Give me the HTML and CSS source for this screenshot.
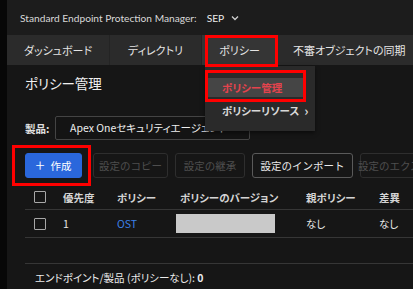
FILE: index.html
```html
<!DOCTYPE html>
<html lang="ja">
<head>
<meta charset="utf-8">
<link rel="stylesheet" href="styles.css">
</head>
<body>
<div class="app">
  <div class="rail"></div>
  <div class="main">
    <header class="topbar">
      <span class="product">Standard Endpoint Protection Manager:</span>
      <span class="server">SEP</span>
      <svg class="chev" width="8" height="6" viewBox="0 0 8 6"><path d="M1 1.5 L4 4.5 L7 1.5" fill="none" stroke="#cfcfcf" stroke-width="1.3"/></svg>
    </header>
    <nav class="nav">
      <div class="tab t-dash">ダッシュボード</div>
      <div class="tab t-dir">ディレクトリ</div>
      <div class="tab t-pol active">ポリシー</div>
      <div class="tab t-sus">不審オブジェクトの同期</div>
    </nav>
    <section class="content">
      <h1 class="title">ポリシー管理</h1>
      <div class="product-row">
        <span class="label">製品:</span>
        <div class="select">Apex Oneセキュリティエージェント</div>
      </div>
      <div class="toolbar">
        <button class="btn primary"><span class="plus">+</span>作成</button>
        <button class="btn disabled w-copy">設定のコピー</button>
        <button class="btn disabled w-inh">設定の継承</button>
        <button class="btn w-imp">設定のインポート</button>
        <button class="btn disabled w-exp">設定のエクスポート</button>
      </div>
      <div class="table">
        <div class="row head">
          <div class="cell c-chk"><span class="chk"></span></div>
          <div class="cell c-pri">優先度</div>
          <div class="cell c-pol">ポリシー</div>
          <div class="cell c-ver pad">ポリシーのバージョン</div>
          <div class="cell c-par">親ポリシー</div>
          <div class="cell c-diff">差異</div>
        </div>
        <div class="row body">
          <div class="cell c-chk"><span class="chk"></span></div>
          <div class="cell c-pri">1</div>
          <div class="cell c-pol link">OST</div>
          <div class="cell c-ver"><span class="redact"></span></div>
          <div class="cell c-par">なし</div>
          <div class="cell c-diff">なし</div>
        </div>
        <div class="row empty"></div>
      </div>
      <p class="footer">エンドポイント/製品 (ポリシーなし): <b>0</b></p>
    </section>
  </div>
</div>

<div class="menu">
  <div class="menu-item selected">ポリシー管理</div>
  <div class="menu-item">ポリシーリソース<span class="gt">›</span></div>
</div>

<div class="mark mark-tab"></div>
<div class="mark mark-menu"></div>
<div class="mark mark-btn"></div>
</body>
</html>
```

FILE: styles.css
```css
* { box-sizing: border-box; }
html, body {
  margin: 0;
  padding: 0;
  width: 413px;
  height: 289px;
  overflow: hidden;
  background: #161616;
  font-family: "Noto Sans CJK JP", "Noto Sans", sans-serif;
  font-feature-settings: "palt";
  color: #e6e6e6;
}
.app {
  display: flex;
  height: 289px;
}
.rail {
  width: 7px;
  flex: none;
  background: #070707;
}
.main {
  flex: 1;
  min-width: 0;
  display: flex;
  flex-direction: column;
  overflow: hidden;
}
.topbar {
  height: 35px;
  flex: none;
  background: #1c1c1c;
  display: flex;
  align-items: center;
  padding-left: 13px;
  font-family: "Lato", "Noto Sans", sans-serif;
  font-size: 10.2px;
  color: #d8d8d8;
  white-space: nowrap;
}
.server {
  margin-left: 10px;
  color: #ededed;
}
.chev { margin-left: 7px; }
.nav {
  height: 30px;
  flex: none;
  display: flex;
  background: #2b2b2b;
  white-space: nowrap;
}
.tab {
  display: flex;
  align-items: center;
  justify-content: center;
  font-size: 11px;
  color: #e4e4e4;
  border-right: 1px solid #242424;
  flex: none;
}
.t-dash { width: 103px; }
.t-dir { width: 92px; }
.t-pol { width: 76px; background: #353535; }
.t-sus { width: 140px; justify-content: flex-start; padding-left: 15px; border-right: none; }

.content {
  padding: 8px 0 0 18px;
  position: relative;
}
.title {
  margin: 0;
  font-size: 13.5px;
  font-weight: 400;
  line-height: 20px;
  height: 20px;
  color: #f0f0f0;
}
.product-row {
  margin-top: 23px;
  height: 24px;
  display: flex;
  align-items: center;
}
.label {
  font-size: 10.5px;
  font-weight: 700;
  color: #e0e0e0;
  width: 30px;
}
.select {
  width: 195px;
  height: 24px;
  border: 1px solid #444;
  border-radius: 2px;
  background: #141414;
  font-size: 10.5px;
  color: #eee;
  padding-left: 14px;
  line-height: 22px;
  white-space: nowrap;
  overflow: hidden;
}
.toolbar {
  margin-top: 13px;
  height: 25px;
  display: flex;
  gap: 7px;
  white-space: nowrap;
}
.btn {
  flex: none;
  height: 25px;
  border-radius: 3px;
  border: 1px solid #5a5a5a;
  background: #161616;
  color: #eaeaea;
  font-family: inherit;
  font-size: 10.5px;
  padding: 0;
  display: flex;
  align-items: center;
  justify-content: center;
}
.btn.primary {
  width: 57px;
  margin-right: 4px;
  background: #2a67dc;
  border-color: #2a67dc;
  color: #fff;
}
.plus {
  font-size: 17px;
  font-weight: 300;
  line-height: 1;
  margin-right: 6px;
  margin-top: -2px;
}
.btn.disabled {
  border-color: #2e2e2e;
  color: #4e4e4e;
}
.w-copy { width: 75px; }
.w-inh { width: 70px; }
.w-imp { width: 101px; }
.w-exp { width: 90px; }

.table {
  margin-top: 7px;
  width: 420px;
}
.row {
  display: grid;
  grid-template-columns: 38px 54px 59px 130px 73px 1fr;
  align-items: center;
  border-bottom: 1px solid #363636;
  font-size: 10.5px;
  white-space: nowrap;
}
.row.head {
  height: 25px;
  font-weight: 700;
  color: #d4d4d4;
}
.row.body {
  height: 28px;
  color: #e8e8e8;
}
.row.empty { height: 26px; }
.cell.pad { padding-left: 4px; }
.c-chk { padding-left: 9px; display: flex; }
.chk {
  width: 12px;
  height: 12px;
  border: 1px solid #a8a8a8;
  border-radius: 1px;
}
.link { color: #3d82e8; }
.redact {
  display: block;
  width: 99px;
  height: 19px;
  background: #c9c9c9;
}
.footer {
  margin: 7px 0 0 10px;
  font-size: 10.5px;
  color: #ececec;
  line-height: 14px;
  white-space: nowrap;
}
.footer b { font-weight: 700; }

.menu {
  position: absolute;
  left: 205px;
  top: 66px;
  width: 110px;
  height: 65px;
  background: #2a2a2a;
  padding-top: 12px;
  box-shadow: 0 2px 4px rgba(0,0,0,0.5);
}
.menu-item {
  height: 19px;
  padding-left: 17px;
  display: flex;
  align-items: center;
  font-size: 10.5px;
  font-weight: 700;
  color: #d8d8d8;
  white-space: nowrap;
  margin-bottom: 4px;
}
.menu-item.selected {
  background: #454545;
  color: #e4434d;
  margin-right: 10px;
}
.gt {
  margin-left: 5px;
  font-size: 13px;
  font-weight: 700;
}
.mark {
  position: absolute;
  border: 3px solid #ff0000;
}
.mark-tab { left: 205px; top: 35px; width: 73px; height: 32px; }
.mark-menu { left: 205px; top: 70px; width: 101px; height: 32px; }
.mark-btn { left: 12px; top: 145px; width: 79px; height: 41px; }
```
